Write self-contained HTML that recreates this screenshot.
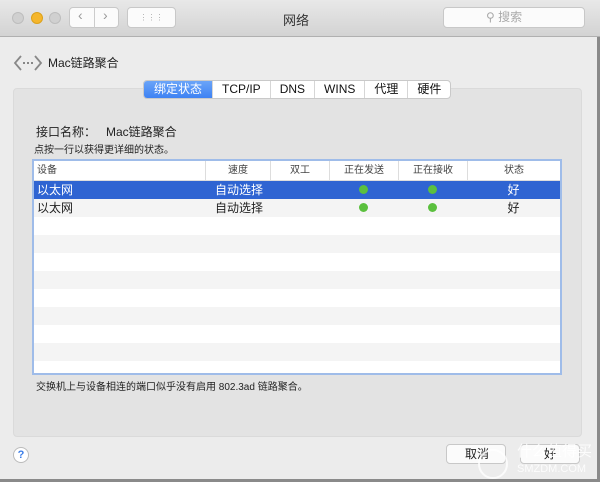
<!DOCTYPE html><html><head><meta charset="utf-8"><style>
*{margin:0;padding:0;box-sizing:border-box}
body{width:600px;height:482px;overflow:hidden;background:#ececec;font-family:"Liberation Sans","Noto Sans CJK SC",sans-serif;font-size:12px;color:#222;position:relative}
.tb{position:absolute;left:0;top:0;width:600px;height:37px;background:linear-gradient(#e8e8e8,#d3d3d3);border-bottom:1px solid #b0b0b0}
.dot{position:absolute;top:12px;width:12px;height:12px;border-radius:50%;background:#d0d0d0;border:1px solid #bdbdbd}
.btn{position:absolute;background:#fbfbfb;border:1px solid #c8c8c8;border-radius:4px}
.abs{position:absolute}
.panel{position:absolute;left:13px;top:88px;width:569px;height:349px;background:#e3e3e3;border:1px solid #dadada;border-radius:4px}
.tabs{position:absolute;left:143px;top:80px;height:19px;display:flex;border:1px solid #c9c9c9;border-radius:4px;background:#fff;overflow:hidden}
.tabs div{padding:0 9px;line-height:17px;font-size:12px;border-left:1px solid #d6d6d6;color:#111}
.tabs div:first-child{border-left:none;background:linear-gradient(#6aa4f8,#3e82f3);color:#fff;padding:0 10px}
.table{position:absolute;left:32px;top:159px;width:530px;height:216px;border:2px solid #9fbce9;background:#fff;overflow:hidden}
.row{position:absolute;left:0;width:526px;height:18px;font-size:12px;line-height:18px}
.hd{position:absolute;top:0;left:0;width:526px;height:20px;border-bottom:1px solid #ddd;font-size:10px;color:#444;line-height:20px}
.c{position:absolute;text-align:center}
.g{display:inline-block;width:9px;height:9px;border-radius:50%;background:#5bc03e}
</style></head><body>
<div class="tb">
<div class="dot" style="left:12px"></div><div class="dot" style="left:31px;background:#f5b62c;border-color:#dba11c"></div><div class="dot" style="left:49px"></div>
<div class="btn" style="left:69px;top:7px;width:50px;height:21px"></div>
<div class="abs" style="left:94px;top:7px;width:1px;height:21px;background:#ccc"></div>
<div class="abs" style="left:78px;top:7px;color:#999;font-size:14px">&lsaquo;</div><div class="abs" style="left:103px;top:7px;color:#999;font-size:14px">&rsaquo;</div>
<div class="btn" style="left:127px;top:7px;width:49px;height:21px;color:#aaa;font-size:8px;text-align:center;line-height:19px">⋮⋮⋮</div>
<div class="abs" style="left:283px;top:10px;font-size:13px;color:#333">网络</div>
<div class="btn" style="left:443px;top:7px;width:142px;height:21px;color:#aaa;font-size:12px;padding-left:42px;line-height:19px">⚲ 搜索</div>
</div>
<div class="abs" style="left:597px;top:37px;width:3px;height:445px;background:#8a8a8a"></div>
<div class="abs" style="left:0;top:479px;width:600px;height:3px;background:#8a8a8a"></div>
<svg class="abs" style="left:13px;top:53px" width="30" height="20" viewBox="0 0 30 20"><path d="M8 3 L2 10 L8 17 M22 3 L28 10 L22 17" stroke="#888" stroke-width="1.8" fill="none"/><circle cx="11" cy="10" r="1" fill="#666"/><circle cx="15" cy="10" r="1" fill="#666"/><circle cx="19" cy="10" r="1" fill="#666"/></svg>
<div class="abs" style="left:48px;top:54px;font-size:12px">Mac链路聚合</div>
<div class="panel"></div>
<div class="tabs"><div>绑定状态</div><div>TCP/IP</div><div>DNS</div><div>WINS</div><div>代理</div><div>硬件</div></div>
<div class="abs" style="left:36px;top:123px;font-size:12px">接口名称：&nbsp;&nbsp;&nbsp;Mac链路聚合</div>
<div class="abs" style="left:34px;top:145px;font-size:10px;line-height:12px">点按一行以获得更详细的状态。</div>
<div class="table">
<div class="hd"><span class="abs" style="left:3px">设备</span>
<span class="c" style="left:171px;width:65px;border-left:1px solid #ddd">速度</span>
<span class="c" style="left:236px;width:59px;border-left:1px solid #ddd">双工</span>
<span class="c" style="left:295px;width:69px;border-left:1px solid #ddd">正在发送</span>
<span class="c" style="left:364px;width:69px;border-left:1px solid #ddd">正在接收</span>
<span class="c" style="left:433px;width:93px;border-left:1px solid #ddd">状态</span></div>
<div class="row" style="top:20px;background:#2f64d2;color:#fff"><span class="abs" style="left:3px">以太网</span><span class="c" style="left:165px;width:80px">自动选择</span><span class="c" style="left:295px;width:69px"><i class="g"></i></span><span class="c" style="left:364px;width:69px"><i class="g"></i></span><span class="c" style="left:433px;width:93px">好</span></div>
<div class="row" style="top:38px;background:#f4f4f4"><span class="abs" style="left:3px">以太网</span><span class="c" style="left:165px;width:80px">自动选择</span><span class="c" style="left:295px;width:69px"><i class="g"></i></span><span class="c" style="left:364px;width:69px"><i class="g"></i></span><span class="c" style="left:433px;width:93px">好</span></div>
<div class="row" style="top:74px;background:#f4f4f4"></div><div class="row" style="top:110px;background:#f4f4f4"></div><div class="row" style="top:146px;background:#f4f4f4"></div><div class="row" style="top:182px;background:#f4f4f4"></div>
</div>
<div class="abs" style="left:36px;top:378px;font-size:10px">交换机上与设备相连的端口似乎没有启用 802.3ad 链路聚合。</div>
<div class="abs" style="left:13px;top:447px;width:16px;height:16px;border-radius:50%;background:#fff;border:1px solid #bbb;color:#3b7de8;font-size:11px;text-align:center;line-height:14px;font-weight:bold">?</div>
<div class="btn" style="left:446px;top:444px;width:60px;height:20px;font-size:12px;padding-left:18px;line-height:18px">取消</div>
<div class="btn" style="left:520px;top:444px;width:60px;height:20px;font-size:12px;text-align:center;line-height:18px">好</div>
<div class="abs" style="left:478px;top:449px;width:30px;height:30px;border-radius:50%;border:2px solid rgba(255,255,255,.8)"></div>
<div class="abs" style="left:517px;top:440px;color:rgba(255,255,255,.85);font-size:15px">什么值得买</div>
<div class="abs" style="left:517px;top:463px;color:rgba(255,255,255,.85);font-size:11px">SMZDM.COM</div>
</body></html>
